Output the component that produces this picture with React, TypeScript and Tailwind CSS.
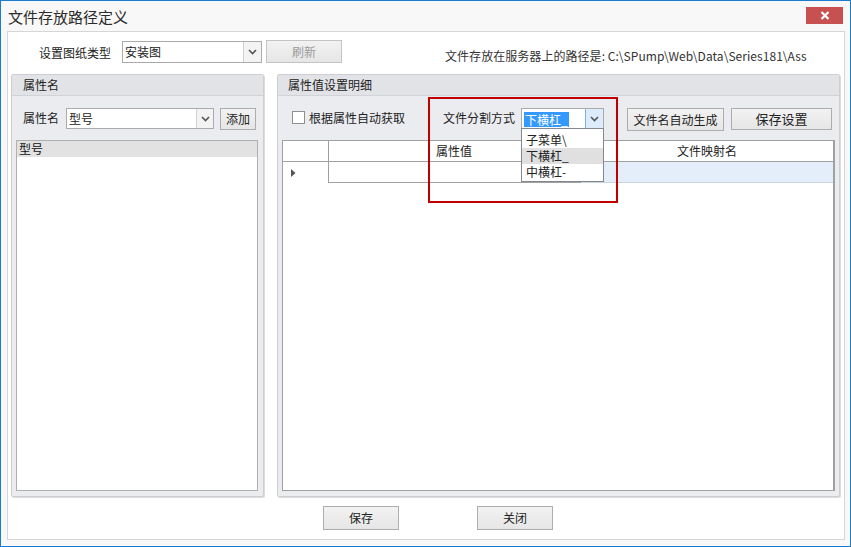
import React from "react";

const font = { fontFamily: '"Microsoft YaHei", "Noto Sans CJK SC", "Noto Sans", sans-serif' };

function Chevron({ className = "" }: { className?: string }) {
  return (
    <svg width="9" height="6" viewBox="0 0 9 6" className={className}>
      <path d="M1 1 L4.5 4.5 L8 1" stroke="#555" strokeWidth="1.6" fill="none" />
    </svg>
  );
}

function Btn({ label, className = "", disabled = false }: { label: string; className?: string; disabled?: boolean }) {
  return (
    <div
      className={
        "flex items-center justify-center border border-[#adadad] bg-gradient-to-b from-[#f2f2f2] to-[#e6e6e6] text-[12px] " +
        (disabled ? "text-[#9a9a9a] border-[#c4c4c4] " : "text-[#222] ") +
        className
      }
    >
      {label}
    </div>
  );
}

export default function App() {
  return (
    <div style={font} className="w-[851px] h-[547px] border border-[#1a7bd1] bg-[#f8f8f8] flex flex-col overflow-hidden">
      {/* title bar */}
      <div className="h-[30px] flex items-start justify-between pl-[7px] pr-[7px]">
        <div className="text-[15px] text-[#2b2b2b] leading-[20px] mt-[6px]">文件存放路径定义</div>
        <div className="w-[37px] h-[17px] mt-[6px] bg-[#c75050] flex items-center justify-center">
          <svg width="10" height="9" viewBox="0 0 10 9">
            <path d="M1.5 1 L8.5 8 M8.5 1 L1.5 8" stroke="#fff" strokeWidth="2.2" />
          </svg>
        </div>
      </div>
      {/* content panel */}
      <div className="ml-[6px] w-[838px] h-[509px] border border-[#d6d6d6] bg-white flex flex-col">
        {/* top row */}
        <div className="h-[42px] flex items-start pt-[9px] text-[12px] text-[#222]">
          <div className="ml-[31px] w-[83px] leading-[22px] mt-[1px]">设置图纸类型</div>
          <div className="w-[140px] h-[22px] border border-[#ababab] bg-white flex">
            <div className="flex-1 leading-[20px] pl-[2px]">安装图</div>
            <div className="w-[18px] border-l border-[#d0d0d0] bg-[#f3f3f3] flex items-center justify-center">
              <Chevron />
            </div>
          </div>
          <Btn label="刷新" disabled className="ml-[4px] w-[76px] h-[23px] -mt-[1px]" />
          <div className="ml-[103px] leading-[22px] mt-[4px] text-[#333] tracking-[0.05px]">
            文件存放在服务器上的路径是: C:\SPump\Web\Data\Series181\Ass
          </div>
        </div>
        {/* groups */}
        <div className="flex pl-[3px] gap-[13px]">
          {/* left group */}
          <div className="w-[253px] h-[423px] border border-[#cdcdd2] rounded-[2px] bg-[#ebecf0] flex flex-col shadow-[1px_1px_0_#dcdce0]">
            <div className="h-[21px] bg-[#e2e3e7] border-b border-[#d2d3d8] text-[12px] text-[#222] leading-[20px] pl-[11px]">属性名</div>
            <div className="h-[44px] flex items-start pt-[12px] text-[12px] text-[#222]">
              <div className="ml-[11px] w-[43px] leading-[20px]">属性名</div>
              <div className="w-[148px] h-[21px] border border-[#ababab] bg-white flex">
                <div className="flex-1 leading-[19px] pl-[2px]">型号</div>
                <div className="w-[17px] border-l border-[#d0d0d0] bg-[#f3f3f3] flex items-center justify-center">
                  <Chevron />
                </div>
              </div>
              <Btn label="添加" className="ml-[6px] w-[36px] h-[22px]" />
            </div>
            <div className="ml-[4px] w-[242px] h-[351px] border border-[#b0b0b0] bg-white">
              <div className="h-[16px] bg-[#e2e2e2] text-[12px] text-[#111] leading-[16px] pl-[2px]">型号</div>
            </div>
          </div>
          {/* right group */}
          <div className="w-[563px] h-[423px] border border-[#cdcdd2] rounded-[2px] bg-[#ebecf0] flex flex-col shadow-[1px_1px_0_#dcdce0]">
            <div className="h-[21px] bg-[#e2e3e7] border-b border-[#d2d3d8] text-[12px] text-[#222] leading-[20px] pl-[10px]">属性值设置明细</div>
            <div className="h-[44px] flex items-start pt-[12px] text-[12px] text-[#222] relative">
              <div className="ml-[14px] mt-[3px] w-[13px] h-[13px] border border-[#8f8f8f] bg-white" />
              <div className="ml-[4px] leading-[20px]">根据属性自动获取</div>
              <div className="ml-[38px] leading-[20px]">文件分割方式</div>
              <div className="ml-[6px] w-[83px] h-[21px] border border-[#ababab] bg-white flex relative">
                <div className="flex-1 pl-[2px] pt-[2px]">
                  <span className="bg-[#3399ff] text-white leading-[15px] inline-block px-[1px]">下横杠_</span>
                </div>
                <div className="w-[18px] border-l border-[#7eb4ea] bg-[#dcecfc] flex items-center justify-center">
                  <Chevron />
                </div>
                {/* dropdown list */}
                <div className="absolute left-[-1px] top-[19px] w-[83px] border border-[#828790] bg-white z-10 flex flex-col pt-[3px] pb-[1px] text-[12px] text-[#222]">
                  <div className="h-[16px] leading-[16px] pl-[4px]">子菜单\</div>
                  <div className="h-[16px] leading-[16px] pl-[4px] bg-[#e0e0e0]">下横杠_</div>
                  <div className="h-[16px] leading-[16px] pl-[4px]">中横杠-</div>
                </div>
              </div>
              <Btn label="文件名自动生成" className="ml-[23px] w-[97px] h-[23px]" />
              <Btn label="保存设置" className="ml-[7px] w-[101px] h-[22px] text-[13px]" />
              {/* red highlight box */}
              <div className="absolute left-[150px] top-[1px] w-[190px] h-[106px] border-2 border-[#c00000] z-20 pointer-events-none" />
            </div>
            {/* grid */}
            <div className="ml-[4px] w-[553px] h-[351px] border border-[#a0a0a0] border-r-2 bg-white flex flex-col text-[12px] text-[#222]">
              <div className="h-[21px] flex border-b border-[#a0a0a0]">
                <div className="w-[46px] border-r border-[#a0a0a0]" />
                <div className="w-[252px] border-r border-[#d0d0d0] leading-[20px] pl-[107px]">属性值</div>
                <div className="flex-1 leading-[20px] text-center">文件映射名</div>
              </div>
              <div className="h-[21px] flex">
                <div className="w-[46px] border-r border-[#a0a0a0] flex items-center pl-[8px]">
                  <svg width="5" height="8" viewBox="0 0 5 8"><path d="M0 0 L4.5 4 L0 8 Z" fill="#555" /></svg>
                </div>
                <div className="w-[252px] border-b border-[#a0a0a0]" />
                <div className="flex-1 bg-[#e3eefa] border-b border-[#c8d4e0]" />
              </div>
            </div>
          </div>
        </div>
        {/* bottom buttons */}
        <div className="flex pt-[9px]">
          <Btn label="保存" className="ml-[315px] w-[76px] h-[24px]" />
          <Btn label="关闭" className="ml-[78px] w-[76px] h-[24px]" />
        </div>
      </div>
    </div>
  );
}
